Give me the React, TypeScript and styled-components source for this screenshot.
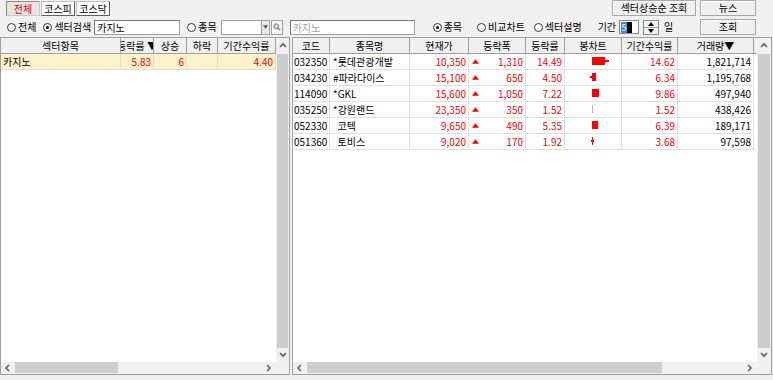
import React from 'react';
import styled, { createGlobalStyle } from 'styled-components';

const GlobalStyle = createGlobalStyle`
  html, body {
    margin: 0;
    padding: 0;
    background: #f0f0f0;
  }
  body {
    font-family: "Noto Sans CJK KR", "Noto Sans", sans-serif;
    font-size: 10px;
    color: #000;
  }
`;

const Screen = styled.div`
  width: 773px;
  height: 380px;
  background: #f0f0f0;
  display: flex;
  flex-direction: column;
  overflow: hidden;
`;

const TopBar = styled.div`
  height: 17px;
  display: flex;
  align-items: flex-start;
  padding-left: 6px;
`;

const Tab = styled.div<{ $active?: boolean }>`
  width: 34px;
  height: 15px;
  margin-top: 1px;
  margin-right: 1px;
  box-sizing: border-box;
  display: flex;
  align-items: center;
  justify-content: center;
  line-height: 13px;
  background: ${({ $active }) => ($active ? '#e4e4e4' : '#fff')};
  color: ${({ $active }) => ($active ? '#e00000' : '#000')};
  border: 1px solid;
  border-color: ${({ $active }) => ($active ? '#8a8a8a #c8c8c8 #c8c8c8 #8a8a8a' : '#c0c0c0 #606060 #606060 #c0c0c0')};
`;

const Spacer = styled.div`
  flex: 1;
`;

const Button = styled.div<{ $w: number; $ml?: number }>`
  width: ${({ $w }) => $w}px;
  height: 16px;
  margin-left: ${({ $ml }) => $ml ?? 0}px;
  box-sizing: border-box;
  background: #efefef;
  border: 1px solid #a8a8a8;
  box-shadow: inset 1px 1px 0 #fff;
  display: flex;
  align-items: center;
  justify-content: center;
  line-height: 14px;
`;

const FilterBar = styled.div`
  height: 20px;
  display: flex;
  align-items: center;
  padding-right: 17px;
`;

const RadioLabel = styled.div<{ $ml: number }>`
  display: flex;
  align-items: center;
  gap: 2px;
  margin-left: ${({ $ml }) => $ml}px;
  line-height: 14px;
  white-space: nowrap;
`;

const RadioDot = styled.span<{ $on?: boolean }>`
  width: 9px;
  height: 9px;
  box-sizing: border-box;
  border-radius: 50%;
  border: 1px solid #333;
  background: #fff;
  display: flex;
  align-items: center;
  justify-content: center;
  &::after {
    content: '';
    width: 3px;
    height: 3px;
    border-radius: 50%;
    background: ${({ $on }) => ($on ? '#000' : 'transparent')};
  }
`;

const TextBox = styled.div<{ $w: number; $ml: number; $muted?: boolean }>`
  width: ${({ $w }) => $w}px;
  height: 15px;
  margin-left: ${({ $ml }) => $ml}px;
  box-sizing: border-box;
  background: #fff;
  border: 1px solid #a0a0a0;
  border-top-color: #7a7a7a;
  border-left-color: #7a7a7a;
  padding-left: 2px;
  line-height: 13px;
  color: ${({ $muted }) => ($muted ? '#a0a0a0' : '#000')};
  white-space: nowrap;
  overflow: hidden;
`;

const Combo = styled.div`
  display: flex;
  margin-left: 4px;
  height: 15px;
`;

const ComboField = styled.div`
  width: 40px;
  box-sizing: border-box;
  background: #fff;
  border: 1px solid #a0a0a0;
  border-right: none;
`;

const ComboDrop = styled.div`
  width: 9px;
  box-sizing: border-box;
  background: #e8e8e8;
  border: 1px solid #a0a0a0;
  display: flex;
  align-items: center;
  justify-content: center;
`;

const SearchBtn = styled.div`
  width: 12px;
  margin-left: 1px;
  box-sizing: border-box;
  background: #f4f4f4;
  border: 1px solid #a0a0a0;
  display: flex;
  align-items: center;
  justify-content: center;
`;

const Label = styled.div<{ $ml: number }>`
  margin-left: ${({ $ml }) => $ml}px;
  line-height: 14px;
`;

const SpinField = styled.div`
  width: 20px;
  height: 14px;
  margin-left: 3px;
  box-sizing: border-box;
  background: #fff;
  border: 1px solid #8a8a8a;
  display: flex;
  align-items: center;
  padding-left: 1px;
`;

const Selected = styled.span`
  width: 6px;
  height: 11px;
  background: #3b8fe8;
  color: #fff;
  font-size: 9px;
  line-height: 11px;
  text-align: center;
`;

const Caret = styled.span`
  width: 5px;
  height: 11px;
  background: #000;
`;

const Spin = styled.div`
  width: 16px;
  height: 15px;
  margin-left: 4px;
  display: flex;
  flex-direction: column;
  box-sizing: border-box;
  border: 1px solid #8a8a8a;
  background: #f2f2f2;
`;

const SpinHalf = styled.div<{ $top?: boolean }>`
  flex: 1;
  display: flex;
  align-items: center;
  justify-content: center;
  border-bottom: ${({ $top }) => ($top ? '1px solid #a0a0a0' : 'none')};
`;

const Panels = styled.div`
  display: flex;
  gap: 2px;
`;

const Panel = styled.div<{ $w: number }>`
  width: ${({ $w }) => $w}px;
  height: 338px;
  box-sizing: border-box;
  border: 1px solid #a0a0a0;
  display: flex;
  flex-direction: column;
  background: #fff;
`;

const PanelBody = styled.div`
  flex: 1;
  display: flex;
  min-height: 0;
`;

const TableArea = styled.div`
  flex: 1;
  background: #fff;
  overflow: hidden;
`;

const Row = styled.div<{ $cols: string; $bg?: string }>`
  display: grid;
  grid-template-columns: ${({ $cols }) => $cols};
  height: 16px;
  background: ${({ $bg }) => $bg ?? 'transparent'};
`;

const HeaderRow = styled(Row)`
  background: #f0f0f0;
`;

const HeadCell = styled.div`
  box-sizing: border-box;
  border-right: 1px solid #a0a0a0;
  border-bottom: 1px solid #a0a0a0;
  display: flex;
  justify-content: center;
  align-items: center;
  line-height: 15px;
  white-space: nowrap;
  overflow: hidden;
`;

const HeadFill = styled.div`
  background: #f0f0f0;
  border-bottom: 1px solid #a0a0a0;
  box-sizing: border-box;
`;

const Cell = styled.div<{ $align?: 'left' | 'right'; $red?: boolean; $pad?: number }>`
  box-sizing: border-box;
  border-right: 1px solid #dedede;
  border-bottom: 1px solid #dedede;
  line-height: 15px;
  text-align: ${({ $align }) => $align ?? 'left'};
  padding: 0 ${({ $pad }) => $pad ?? 2}px;
  color: ${({ $red }) => ($red ? '#ff0000' : '#000')};
  white-space: pre;
  overflow: hidden;
`;

const ChangeCell = styled(Cell)`
  display: flex;
  align-items: center;
  justify-content: space-between;
  padding-left: 3px;
`;

const ChartCell = styled.div`
  box-sizing: border-box;
  border-right: 1px solid #dedede;
  border-bottom: 1px solid #dedede;
  display: flex;
`;

const VScroll = styled.div<{ $w: number }>`
  width: ${({ $w }) => $w}px;
  background: #f0f0f0;
  display: flex;
  flex-direction: column;
`;

const ArrowBox = styled.div<{ $size: number; $vertical?: boolean }>`
  ${({ $vertical, $size }) => ($vertical ? `height: ${$size}px;` : `width: ${$size}px;`)}
  flex-shrink: 0;
  display: flex;
  align-items: center;
  justify-content: center;
`;

const VThumb = styled.div`
  flex: 1;
  margin: 0 1px;
  background: #cdcdcd;
`;

const HScroll = styled.div`
  height: 12px;
  background: #f0f0f0;
  display: flex;
`;

const HTrack = styled.div`
  flex: 1;
  display: flex;
  align-items: stretch;
  padding-bottom: 1px;
`;

const HThumb = styled.div<{ $w: number }>`
  width: ${({ $w }) => $w}px;
  background: #cdcdcd;
`;

const Corner = styled.div<{ $w: number }>`
  width: ${({ $w }) => $w}px;
`;

const Chevron = ({ dir }: { dir: 'up' | 'down' | 'left' | 'right' }) => {
  const pts = {
    up: '1,5 4,2 7,5',
    down: '1,2 4,5 7,2',
    left: '5,1 2,4 5,7',
    right: '2,1 5,4 2,7',
  }[dir];
  return (
    <svg width="8" height="8" viewBox="0 0 8 8">
      <polyline points={pts} fill="none" stroke="#606060" strokeWidth="1.6" />
    </svg>
  );
};

const Tri = ({ up, color = '#000', w = 5 }: { up?: boolean; color?: string; w?: number }) => (
  <svg width={w} height={Math.ceil(w / 2) + 1} viewBox="0 0 6 4">
    <polygon points={up ? '0,4 3,0 6,4' : '0,0 6,0 3,4'} fill={color} />
  </svg>
);

type Candle = { wl?: number; bl: number; br: number; wr?: number; light?: boolean };

const CandleBar = ({ c }: { c: Candle }) => {
  const color = c.light ? '#ff9a9a' : '#ff0000';
  return (
    <svg width="56" height="15" viewBox="0 0 56 15">
      {c.wl !== undefined && <rect x={c.wl} y={6} width={c.bl - c.wl} height={2} fill={color} />}
      {c.wr !== undefined && <rect x={c.br} y={6} width={c.wr - c.br} height={2} fill={color} />}
      <rect x={c.bl} y={3} width={c.br - c.bl} height={8} fill={color} />
    </svg>
  );
};

const VerticalBar = ({ w }: { w: number }) => (
  <VScroll $w={w}>
    <ArrowBox $vertical $size={16}>
      <Chevron dir="up" />
    </ArrowBox>
    <VThumb />
    <ArrowBox $vertical $size={14}>
      <Chevron dir="down" />
    </ArrowBox>
  </VScroll>
);

const HorizontalBar = ({ thumb, corner }: { thumb: number; corner: number }) => (
  <HScroll>
    <ArrowBox $size={14}>
      <Chevron dir="left" />
    </ArrowBox>
    <HTrack>
      <HThumb $w={thumb} />
    </HTrack>
    <ArrowBox $size={14}>
      <Chevron dir="right" />
    </ArrowBox>
    <Corner $w={corner} />
  </HScroll>
);

const LEFT_COLS = '120px 33px 33px 31px 58px';
const RIGHT_COLS = '37px 80px 59px 57px 39px 57px 56px 76px 1fr';

const stocks = [
  { code: '032350', name: '*롯데관광개발', price: '10,350', diff: '1,310', rate: '14.49', candle: { bl: 27, br: 40, wr: 44 }, ret: '14.62', vol: '1,821,714' },
  { code: '034230', name: '#파라다이스', price: '15,100', diff: '650', rate: '4.50', candle: { wl: 25, bl: 27, br: 31 }, ret: '6.34', vol: '1,195,768' },
  { code: '114090', name: '*GKL', price: '15,600', diff: '1,050', rate: '7.22', candle: { bl: 27, br: 34 }, ret: '9.86', vol: '497,940' },
  { code: '035250', name: '*강원랜드', price: '23,350', diff: '350', rate: '1.52', candle: { bl: 27, br: 28, light: true }, ret: '1.52', vol: '438,426' },
  { code: '052330', name: '  코텍', price: '9,650', diff: '490', rate: '5.35', candle: { bl: 27, br: 33 }, ret: '6.39', vol: '189,171' },
  { code: '051360', name: '  토비스', price: '9,020', diff: '170', rate: '1.92', candle: { wl: 26, bl: 27, br: 28, wr: 29 }, ret: '3.68', vol: '97,598' },
];

export default function App() {
  return (
    <>
      <GlobalStyle />
      <Screen>
        <TopBar>
          <Tab $active>전체</Tab>
          <Tab>코스피</Tab>
          <Tab>코스닥</Tab>
          <Spacer />
          <Button $w={84}>섹터상승순 조회</Button>
          <Button $w={56} $ml={4}>뉴스</Button>
          <Spacer style={{ flex: '0 0 17px' }} />
        </TopBar>

        <FilterBar>
          <RadioLabel $ml={7}>
            <RadioDot />
            전체
          </RadioLabel>
          <RadioLabel $ml={7}>
            <RadioDot $on />
            섹터검색
          </RadioLabel>
          <TextBox $w={86} $ml={3}>카지노</TextBox>
          <RadioLabel $ml={7}>
            <RadioDot />
            종목
          </RadioLabel>
          <Combo>
            <ComboField />
            <ComboDrop>
              <Tri color="#555" w={5} />
            </ComboDrop>
            <SearchBtn>
              <svg width="8" height="8" viewBox="0 0 8 8">
                <circle cx="3.2" cy="3.2" r="2.3" fill="none" stroke="#666" strokeWidth="1" />
                <line x1="4.8" y1="4.8" x2="7.2" y2="7.2" stroke="#666" strokeWidth="1.2" />
              </svg>
            </SearchBtn>
          </Combo>
          <TextBox $w={125} $ml={7} $muted>
            카지노
          </TextBox>
          <RadioLabel $ml={18}>
            <RadioDot $on />
            종목
          </RadioLabel>
          <RadioLabel $ml={15}>
            <RadioDot />
            비교차트
          </RadioLabel>
          <RadioLabel $ml={9}>
            <RadioDot />
            섹터설명
          </RadioLabel>
          <Label $ml={16}>기간</Label>
          <SpinField>
            <Selected>5</Selected>
            <Caret />
          </SpinField>
          <Spin>
            <SpinHalf $top>
              <Tri up w={6} />
            </SpinHalf>
            <SpinHalf>
              <Tri w={6} />
            </SpinHalf>
          </Spin>
          <Label $ml={5}>일</Label>
          <Spacer />
          <Button $w={56}>조회</Button>
        </FilterBar>

        <Panels>
          <Panel $w={290}>
            <PanelBody>
              <TableArea>
                <HeaderRow $cols={LEFT_COLS}>
                  <HeadCell>섹터항목</HeadCell>
                  <HeadCell>등락률 ▼</HeadCell>
                  <HeadCell>상승</HeadCell>
                  <HeadCell>하락</HeadCell>
                  <HeadCell>기간수익률</HeadCell>
                </HeaderRow>
                <Row $cols={LEFT_COLS} $bg="#fff1c9">
                  <Cell>카지노</Cell>
                  <Cell $align="right" $red>5.83</Cell>
                  <Cell $align="right" $red>6</Cell>
                  <Cell $align="right" $red></Cell>
                  <Cell $align="right" $red>4.40</Cell>
                </Row>
              </TableArea>
              <VerticalBar w={13} />
            </PanelBody>
            <HorizontalBar thumb={103} corner={13} />
          </Panel>

          <Panel $w={480}>
            <PanelBody>
              <TableArea>
                <HeaderRow $cols={RIGHT_COLS}>
                  <HeadCell>코드</HeadCell>
                  <HeadCell>종목명</HeadCell>
                  <HeadCell>현재가</HeadCell>
                  <HeadCell>등락폭</HeadCell>
                  <HeadCell>등락률</HeadCell>
                  <HeadCell>봉차트</HeadCell>
                  <HeadCell>기간수익률</HeadCell>
                  <HeadCell>거래량▼</HeadCell>
                  <HeadFill />
                </HeaderRow>
                {stocks.map((s) => (
                  <Row key={s.code} $cols={RIGHT_COLS}>
                    <Cell $pad={1}>{s.code}</Cell>
                    <Cell $pad={3}>{s.name}</Cell>
                    <Cell $align="right" $red>{s.price}</Cell>
                    <ChangeCell $red>
                      <Tri up color="#ff0000" w={7} />
                      {s.diff}
                    </ChangeCell>
                    <Cell $align="right" $red>{s.rate}</Cell>
                    <ChartCell>
                      <CandleBar c={s.candle as Candle} />
                    </ChartCell>
                    <Cell $align="right" $red>{s.ret}</Cell>
                    <Cell $align="right">{s.vol}</Cell>
                    <div />
                  </Row>
                ))}
              </TableArea>
              <VerticalBar w={14} />
            </PanelBody>
            <HorizontalBar thumb={355} corner={14} />
          </Panel>
        </Panels>
      </Screen>
    </>
  );
}
